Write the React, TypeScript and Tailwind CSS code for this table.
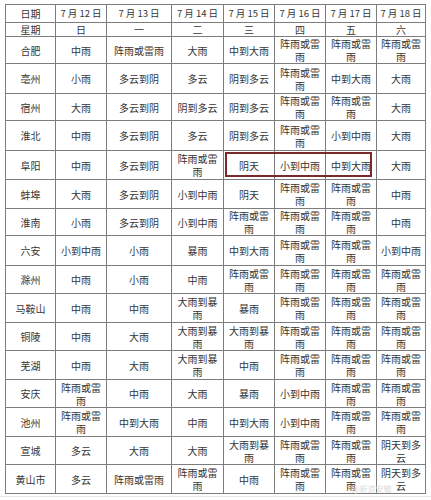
import React from 'react';

const FONT = '"Noto Sans CJK SC", "Noto Sans", sans-serif';

const dates = ['7 月 12 日', '7 月 13 日', '7 月 14 日', '7 月 15 日', '7 月 16 日', '7 月 17 日', '7 月 18 日'];
const weekdays = ['日', '一', '二', '三', '四', '五', '六'];

const L = '阵雨或雷雨';

const rows: { city: string; days: string[] }[] = [
  { city: '合肥', days: ['中雨', L, '大雨', '中到大雨', L, L, L] },
  { city: '亳州', days: ['小雨', '多云到阴', '多云', '阴到多云', L, '中到大雨', '大雨'] },
  { city: '宿州', days: ['大雨', '多云到阴', '阴到多云', '阴到多云', L, L, '大雨'] },
  { city: '淮北', days: ['中雨', '多云到阴', '多云', '阴到多云', L, '小到中雨', '大雨'] },
  { city: '阜阳', days: ['中雨', '多云到阴', L, '阴天', '小到中雨', '中到大雨', '大雨'] },
  { city: '蚌埠', days: ['大雨', '多云到阴', '小到中雨', '阴天', L, L, '中雨'] },
  { city: '淮南', days: ['小雨', '多云到阴', '小到中雨', L, L, L, '中雨'] },
  { city: '六安', days: ['小到中雨', '小雨', '暴雨', '中到大雨', L, L, '小到中雨'] },
  { city: '滁州', days: ['中雨', '小雨', '中雨', L, L, L, L] },
  { city: '马鞍山', days: ['中雨', '中雨', '大雨到暴雨', '暴雨', L, L, L] },
  { city: '铜陵', days: ['中雨', '大雨', '大雨到暴雨', '大雨到暴雨', L, L, L] },
  { city: '芜湖', days: ['中雨', '大雨', '大雨到暴雨', '中雨', L, L, L] },
  { city: '安庆', days: [L, '中雨', '大雨', '暴雨', '小到中雨', L, L] },
  { city: '池州', days: [L, '中到大雨', '中雨', '中到大雨', '小到中雨', L, L] },
  { city: '宣城', days: ['多云', '大雨', '大雨', '大雨到暴雨', L, L, '阴天到多云'] },
  { city: '黄山市', days: ['多云', L, L, '中雨', L, L, '阴天到多云'] },
];

const cell = 'bg-white flex items-center justify-center text-center px-[3px] leading-[13px]';

export default function App() {
  return (
    <div className="w-[431px] h-[500px] bg-white overflow-hidden text-[#363636]" style={{ fontFamily: FONT }}>
      <div className="relative pt-[4px] pl-[5px] h-[497px] border-b border-[#e6e6e6]">
        <div className="grid w-[421px] bg-[#7d7d7d] gap-px p-px text-[10px] grid-cols-[49px_50px_64px_51px_50px_50px_50px_48px] grid-rows-[17px_13px_26px_29px_26px_29px_28px_28px_26px_29px_27px_28px_27px_28px_27px_28px_27px_28px]">
          <div className={cell}>日期</div>
          {dates.map((d) => (
            <div key={d} className={`${cell} whitespace-nowrap px-0 text-[9.5px]`}>{d}</div>
          ))}
          <div className={`${cell} leading-[12px]`}>星期</div>
          {weekdays.map((d) => (
            <div key={d} className={`${cell} leading-[12px]`}>{d}</div>
          ))}
          {rows.map((r) => (
            <React.Fragment key={r.city}>
              <div className={cell}>{r.city}</div>
              {r.days.map((d, i) => (
                <div key={i} className={cell}>{d}</div>
              ))}
            </React.Fragment>
          ))}
        </div>
        <div className="absolute left-[225px] top-[152px] w-[147px] h-[25px] border-2 border-[#7a2a2a] pointer-events-none" />
        <div className="absolute left-[352px] top-[484px] text-[8px] leading-[10px] text-[#dcdcdc] pointer-events-none">@新浪安徽</div>
      </div>
    </div>
  );
}
